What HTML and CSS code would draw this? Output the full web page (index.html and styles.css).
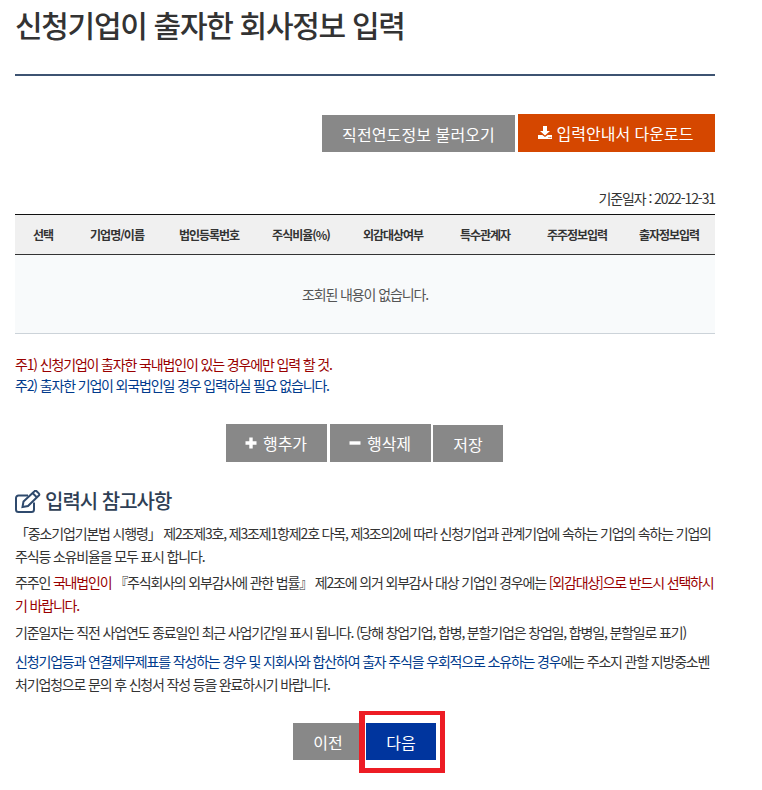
FILE: index.html
```html
<!DOCTYPE html>
<html lang="ko">
<head>
<meta charset="utf-8">
<title>신청기업이 출자한 회사정보 입력</title>
<link rel="stylesheet" href="styles.css">
</head>
<body>
<main class="page">
  <h1 class="title">신청기업이 출자한 회사정보 입력</h1>
  <div class="top-actions">
    <button class="btn btn-gray btn-low">직전연도정보 불러오기</button>
    <button class="btn btn-orange"><svg class="ico" viewBox="0 0 14 14"><path d="M5 0h4v5h3L7 9.500 2 5h3z" fill="#fff"/><path d="M0 9h4.300L7 11l2.700-2H14v4H0z" fill="#fff"/><path d="M10.500 11h1v1h-1zM12.300 11h1v1h-1z" fill="#d54700"/></svg>입력안내서 다운로드</button>
  </div>
  <p class="base-date">기준일자 : 2022-12-31</p>
  <table class="grid">
    <colgroup><col class="col-first"><col span="7" class="col-rest"></colgroup>
    <thead>
      <tr><th>선택</th><th>기업명/이름</th><th>법인등록번호</th><th>주식비율(%)</th><th>외감대상여부</th><th>특수관계자</th><th>주주정보입력</th><th>출자정보입력</th></tr>
    </thead>
    <tbody>
      <tr><td colspan="8">조회된 내용이 없습니다.</td></tr>
    </tbody>
  </table>
  <div class="notes">
    <p class="red">주1) 신청기업이 출자한 국내법인이 있는 경우에만 입력 할 것.</p>
    <p class="blue">주2) 출자한 기업이 외국법인일 경우 입력하실 필요 없습니다.</p>
  </div>
  <div class="row-actions">
    <button class="btn btn-gray btn-row"><svg class="ico" viewBox="0 0 14 14"><path d="M5.300 1.500h3.400v3.800h3.800v3.400H8.700v3.800H5.300V8.700H1.500V5.300h3.800z" fill="#fff"/></svg>행추가</button>
    <button class="btn btn-gray btn-row"><svg class="ico" viewBox="0 0 14 14"><path d="M1.500 5.300h11v3.400h-11z" fill="#fff"/></svg>행삭제</button>
    <button class="btn btn-gray btn-save">저장</button>
  </div>
  <h2 class="sub">
    <svg class="edit" viewBox="0 0 26 23" fill="none" stroke="#2f4a6d" stroke-width="2"><path d="M19 12.500V19.500a2.500 2.500 0 0 1-2.500 2.500H3.500A2.500 2.500 0 0 1 1 19.500V8A2.500 2.500 0 0 1 3.500 5.500H13"/><path d="M8.500 11.500 19.500 1.200a1.500 1.500 0 0 1 2.100 0l2.200 2.200a1.500 1.500 0 0 1 0 2.100L13 16l-5.500 1z"/><path d="M17.500 3l4.500 4.500"/></svg>
    입력시 참고사항
  </h2>
  <div class="guide">
    <p>「중소기업기본법 시행령」 제2조제3호, 제3조제1항제2호 다목, 제3조의2에 따라 신청기업과 관계기업에 속하는 기업의 속하는 기업의 주식등 소유비율을 모두 표시 합니다.</p>
    <p class="mid-gap">주주인 <span class="red">국내법인이</span> 『주식회사의 외부감사에 관한 법률』 제2조에 의거 외부감사 대상 기업인 경우에는 <span class="red">[외감대상]으로 반드시 선택하시기 바랍니다.</span></p>
    <p class="wide-gap">기준일자는 직전 사업연도 종료일인 최근 사업기간일 표시 됩니다. (당해 창업기업, 합병, 분할기업은 창업일, 합병일, 분할일로 표기)</p>
    <p><span class="blue">신청기업등과 연결제무제표를 작성하는 경우 및 지회사와 합산하여 출자 주식을 우회적으로 소유하는 경우</span>에는 주소지 관할 지방중소벤처기업청으로 문의 후 신청서 작성 등을 완료하시기 바랍니다.</p>
  </div>
  <div class="nav-actions">
    <button class="btn btn-gray btn-nav">이전</button>
    <div class="highlight-wrap">
      <button class="btn btn-navy btn-nav">다음</button>
      <span class="highlight"></span>
    </div>
  </div>
</main>
</body>
</html>
```
FILE: styles.css
```css
* { box-sizing: border-box; }
html, body { margin: 0; padding: 0; background: #fff; }
body {
  font-family: "Noto Sans CJK KR", "Noto Sans", sans-serif;
  color: #333;
  width: 762px;
  height: 790px;
  overflow: hidden;
}
.page { width: 700px; margin-left: 15px; }
.title {
  margin: 0;
  height: 76px;
  padding-top: 3px;
  font-size: 30px;
  line-height: 42px;
  font-weight: 500;
  letter-spacing: -1.3px;
  color: #333;
  border-bottom: 2px solid #3e5372;
}
p { margin: 0; }
.btn {
  border: 0;
  font-family: inherit;
  color: #fff;
  font-size: 16px;
  padding: 0;
  display: inline-flex;
  align-items: center;
  justify-content: center;
}
.btn-gray { background: #888; }
.btn-orange { background: #d54700; width: 197px; height: 38px; padding-right: 2px; }
.btn-navy { background: #00359e; }
.ico { width: 14px; height: 14px; margin-right: 5px; }
.top-actions {
  margin-top: 38px;
  display: flex;
  justify-content: flex-end;
  align-items: flex-end;
  gap: 3px;
}
.btn-low { width: 193px; height: 37px; letter-spacing: 0.1px; }
.base-date {
  margin-top: 36px;
  height: 26px;
  font-size: 14px;
  line-height: 20px;
  text-align: right;
  letter-spacing: -1.1px;
}
.grid { width: 700px; border-collapse: collapse; table-layout: fixed; border-top: 1px solid #111; }
.col-first { width: 56px; }
.col-rest { width: 92px; }
.grid th {
  height: 40px;
  padding: 0;
  background: #f0f0f0;
  border-bottom: 1px solid #333;
  font-size: 12px;
  font-weight: 700;
  letter-spacing: -1px;
  color: #333;
}
.grid td {
  height: 79px;
  padding: 0;
  background: #f8fafb;
  border-bottom: 1px solid #ccd3d9;
  text-align: center;
  font-size: 14px;
  letter-spacing: -1.1px;
  color: #555;
}
.notes { margin-top: 20px; font-size: 14px; line-height: 21px; letter-spacing: -1.15px; }
.red { color: #990000; }
.blue { color: #003a8c; }
.row-actions { margin-top: 28px; padding-right: 1px; display: flex; justify-content: center; align-items: flex-end; }
.btn-row { width: 101px; height: 38px; margin-right: 3px; padding-right: 2px; }
.btn-row + .btn-row { margin-right: 2px; }
.btn-save { width: 70px; height: 37px; }
.sub {
  margin: 25px 0 0;
  display: flex;
  align-items: center;
  gap: 4px;
  font-size: 20px;
  line-height: 28px;
  font-weight: 500;
  letter-spacing: -1px;
  color: #2f3f55;
}
.edit { width: 26px; height: 23px; }
.guide { margin-top: 7px; font-size: 14px; line-height: 23px; letter-spacing: -1.17px; }
.guide p { margin-bottom: 3px; word-break: break-all; }
.guide .mid-gap { margin-bottom: 4px; }
.guide .wide-gap { margin-bottom: 6px; }
.nav-actions { margin-top: 27px; padding-right: 1px; display: flex; justify-content: center; gap: 3px; }
.btn-nav { width: 70px; height: 37px; }
.highlight-wrap { position: relative; display: flex; }
.highlight {
  position: absolute;
  left: -7px;
  top: -12px;
  width: 86px;
  height: 62px;
  border: solid #ed1c24;
  border-width: 4px 5px 5px 6px;
}
```
